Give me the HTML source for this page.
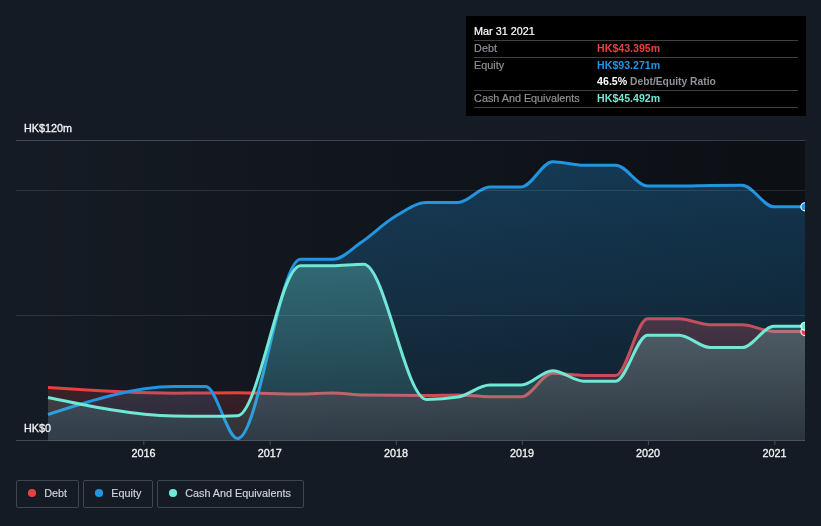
<!DOCTYPE html>
<html><head><meta charset="utf-8"><title>Debt to Equity History</title>
<style>
html,body{margin:0;padding:0;background:#151b24;}
body{width:821px;height:526px;overflow:hidden;position:relative;font-family:"Liberation Sans",sans-serif;}
svg{position:absolute;left:0;top:0;display:block;will-change:transform}
text{font-family:"Liberation Sans",sans-serif;}
</style></head><body>
<svg width="821" height="526" viewBox="0 0 821 526">
<defs>
<linearGradient id="bgG" x1="0" y1="0" x2="1" y2="0"><stop offset="0" stop-color="#000" stop-opacity="0"/><stop offset="1" stop-color="#000" stop-opacity="0.45"/></linearGradient>
<linearGradient id="eG" x1="0" y1="0" x2="0" y2="1"><stop offset="0" stop-color="#2394df" stop-opacity="0.30"/><stop offset="1" stop-color="#2394df" stop-opacity="0.10"/></linearGradient>
<linearGradient id="cG" x1="0" y1="0" x2="0" y2="1"><stop offset="0" stop-color="#71e7d6" stop-opacity="0.30"/><stop offset="1" stop-color="#71e7d6" stop-opacity="0.10"/></linearGradient>
<linearGradient id="dG" x1="0" y1="0" x2="0" y2="1"><stop offset="0" stop-color="#e64141" stop-opacity="0.30"/><stop offset="1" stop-color="#e64141" stop-opacity="0.10"/></linearGradient>
<clipPath id="clip"><rect x="16" y="130" width="789" height="311"/></clipPath>
</defs>
<rect x="0" y="0" width="821" height="526" fill="#151b24"/>
<rect x="16" y="140" width="789" height="300.5" fill="url(#bgG)"/>
<g clip-path="url(#clip)">
<path d="M48.00,387.50C90.13,390.35,132.26,393.20,174.40,393.20C184.87,393.20,195.35,393.07,205.82,393.00C216.41,392.93,227.00,392.80,237.60,392.80C258.55,392.80,279.50,394.00,300.45,394.00C310.92,394.00,321.40,393.00,331.88,393.00C342.47,393.00,353.06,394.83,363.65,395.00C384.60,395.33,405.55,395.50,426.50,395.50C436.98,395.50,447.45,395.00,457.93,395.00C468.52,395.00,479.11,396.70,489.70,396.70C500.29,396.70,510.88,396.70,521.47,396.70C531.83,396.70,542.19,373.20,552.55,373.20C563.03,373.20,573.50,375.50,583.98,375.50C594.57,375.50,605.16,375.50,615.75,375.50C626.34,375.50,636.93,318.80,647.52,318.80C658.00,318.80,668.47,318.80,678.95,318.80C689.42,318.80,699.90,324.70,710.38,324.70C720.97,324.70,731.56,324.70,742.15,324.70C752.74,324.70,763.33,331.50,773.92,331.50C784.28,331.50,794.64,331.50,805.00,331.50L805.00,440.5L48.00,440.5Z" fill="url(#dG)"/><path d="M48.00,387.50C90.13,390.35,132.26,393.20,174.40,393.20C184.87,393.20,195.35,393.07,205.82,393.00C216.41,392.93,227.00,392.80,237.60,392.80C258.55,392.80,279.50,394.00,300.45,394.00C310.92,394.00,321.40,393.00,331.88,393.00C342.47,393.00,353.06,394.83,363.65,395.00C384.60,395.33,405.55,395.50,426.50,395.50C436.98,395.50,447.45,395.00,457.93,395.00C468.52,395.00,479.11,396.70,489.70,396.70C500.29,396.70,510.88,396.70,521.47,396.70C531.83,396.70,542.19,373.20,552.55,373.20C563.03,373.20,573.50,375.50,583.98,375.50C594.57,375.50,605.16,375.50,615.75,375.50C626.34,375.50,636.93,318.80,647.52,318.80C658.00,318.80,668.47,318.80,678.95,318.80C689.42,318.80,699.90,324.70,710.38,324.70C720.97,324.70,731.56,324.70,742.15,324.70C752.74,324.70,763.33,331.50,773.92,331.50C784.28,331.50,794.64,331.50,805.00,331.50" fill="none" stroke="#e64141" stroke-width="3" stroke-linejoin="round"/>
<path d="M48.00,414.50C90.13,400.68,132.26,386.87,174.40,386.60C184.87,386.53,195.35,386.50,205.82,386.50C216.41,386.50,227.00,438.60,237.60,438.60C258.55,438.60,279.50,259.20,300.45,259.20C311.47,259.20,322.48,259.20,333.50,259.20C342.67,259.20,351.83,248.69,361.00,242.50C372.47,234.75,383.95,223.12,395.42,216.30C405.78,210.14,416.14,202.50,426.50,202.50C436.98,202.50,447.45,202.50,457.93,202.50C468.52,202.50,479.11,186.90,489.70,186.90C500.29,186.90,510.88,186.90,521.47,186.90C531.83,186.90,542.19,161.70,552.55,161.70C563.03,161.70,573.50,165.30,583.98,165.30C594.57,165.30,605.16,165.30,615.75,165.30C626.34,165.30,636.93,186.10,647.52,186.10C658.00,186.10,668.47,186.10,678.95,186.10C689.42,186.10,699.90,185.63,710.38,185.50C720.97,185.37,731.56,185.30,742.15,185.30C752.74,185.30,763.33,206.80,773.92,206.80C784.28,206.80,794.64,206.80,805.00,206.80L805.00,440.5L48.00,440.5Z" fill="url(#eG)"/><path d="M48.00,414.50C90.13,400.68,132.26,386.87,174.40,386.60C184.87,386.53,195.35,386.50,205.82,386.50C216.41,386.50,227.00,438.60,237.60,438.60C258.55,438.60,279.50,259.20,300.45,259.20C311.47,259.20,322.48,259.20,333.50,259.20C342.67,259.20,351.83,248.69,361.00,242.50C372.47,234.75,383.95,223.12,395.42,216.30C405.78,210.14,416.14,202.50,426.50,202.50C436.98,202.50,447.45,202.50,457.93,202.50C468.52,202.50,479.11,186.90,489.70,186.90C500.29,186.90,510.88,186.90,521.47,186.90C531.83,186.90,542.19,161.70,552.55,161.70C563.03,161.70,573.50,165.30,583.98,165.30C594.57,165.30,605.16,165.30,615.75,165.30C626.34,165.30,636.93,186.10,647.52,186.10C658.00,186.10,668.47,186.10,678.95,186.10C689.42,186.10,699.90,185.63,710.38,185.50C720.97,185.37,731.56,185.30,742.15,185.30C752.74,185.30,763.33,206.80,773.92,206.80C784.28,206.80,794.64,206.80,805.00,206.80" fill="none" stroke="#2394df" stroke-width="3" stroke-linejoin="round"/>
<path d="M48.00,397.50C90.13,406.35,132.26,415.20,174.40,416.00C184.87,416.20,195.35,416.30,205.82,416.30C216.41,416.30,227.00,416.10,237.60,415.70C258.55,414.91,279.50,265.70,300.45,265.70C310.92,265.70,321.40,265.70,331.88,265.70C342.47,265.70,353.06,264.20,363.65,264.20C384.60,264.20,405.55,399.40,426.50,399.40C436.98,399.40,447.45,398.60,457.93,397.00C468.52,395.38,479.11,385.00,489.70,385.00C500.29,385.00,510.88,385.00,521.47,385.00C531.83,385.00,542.19,370.70,552.55,370.70C563.03,370.70,573.50,381.30,583.98,381.30C594.57,381.30,605.16,381.27,615.75,381.20C626.34,381.13,636.93,335.20,647.52,335.20C658.00,335.20,668.47,335.20,678.95,335.20C689.42,335.20,699.90,347.60,710.38,347.60C720.97,347.60,731.56,347.60,742.15,347.60C752.74,347.60,763.33,326.30,773.92,326.30C784.28,326.30,794.64,326.30,805.00,326.30L805.00,440.5L48.00,440.5Z" fill="url(#cG)"/><path d="M48.00,397.50C90.13,406.35,132.26,415.20,174.40,416.00C184.87,416.20,195.35,416.30,205.82,416.30C216.41,416.30,227.00,416.10,237.60,415.70C258.55,414.91,279.50,265.70,300.45,265.70C310.92,265.70,321.40,265.70,331.88,265.70C342.47,265.70,353.06,264.20,363.65,264.20C384.60,264.20,405.55,399.40,426.50,399.40C436.98,399.40,447.45,398.60,457.93,397.00C468.52,395.38,479.11,385.00,489.70,385.00C500.29,385.00,510.88,385.00,521.47,385.00C531.83,385.00,542.19,370.70,552.55,370.70C563.03,370.70,573.50,381.30,583.98,381.30C594.57,381.30,605.16,381.27,615.75,381.20C626.34,381.13,636.93,335.20,647.52,335.20C658.00,335.20,668.47,335.20,678.95,335.20C689.42,335.20,699.90,347.60,710.38,347.60C720.97,347.60,731.56,347.60,742.15,347.60C752.74,347.60,763.33,326.30,773.92,326.30C784.28,326.30,794.64,326.30,805.00,326.30" fill="none" stroke="#71e7d6" stroke-width="3" stroke-linejoin="round"/>
<circle cx="805.0" cy="331.5" r="4.1" fill="#e64141" stroke="#fff" stroke-width="1.1"/>
<circle cx="805.0" cy="206.8" r="4.1" fill="#2394df" stroke="#fff" stroke-width="1.1"/>
<circle cx="805.0" cy="326.3" r="4.1" fill="#71e7d6" stroke="#fff" stroke-width="1.1"/>
</g>
<g stroke="#fff" stroke-width="1" shape-rendering="crispEdges">
<line x1="16" x2="805" y1="140.5" y2="140.5" stroke-opacity="0.20"/>
<line x1="16" x2="805" y1="190.5" y2="190.5" stroke-opacity="0.10"/>
<line x1="16" x2="805" y1="315.5" y2="315.5" stroke-opacity="0.10"/>
<line x1="16" x2="805" y1="440.5" y2="440.5" stroke-opacity="0.20"/>
</g>
<g stroke="#fff" stroke-opacity="0.22" stroke-width="1">
<line x1="143.8" x2="143.8" y1="441" y2="445"/><line x1="270.2" x2="270.2" y1="441" y2="445"/><line x1="396.3" x2="396.3" y1="441" y2="445"/><line x1="522.3" x2="522.3" y1="441" y2="445"/><line x1="648.4" x2="648.4" y1="441" y2="445"/><line x1="774.8" x2="774.8" y1="441" y2="445"/>
</g>
<g font-size="10.8" fill="#f4f5f6" stroke="#f4f5f6" stroke-width="0.3">
<text x="24" y="132">HK$120m</text>
<text x="24" y="432">HK$0</text>
<text x="143.4" y="456.8" text-anchor="middle">2016</text><text x="269.8" y="456.8" text-anchor="middle">2017</text><text x="395.9" y="456.8" text-anchor="middle">2018</text><text x="521.9" y="456.8" text-anchor="middle">2019</text><text x="648.0" y="456.8" text-anchor="middle">2020</text><text x="774.4" y="456.8" text-anchor="middle">2021</text>
</g>
<!-- tooltip -->
<rect x="466" y="16" width="340" height="100" fill="#000"/>
<g stroke="#fff" stroke-opacity="0.25" stroke-width="1" shape-rendering="crispEdges">
<line x1="474" x2="798" y1="40.5" y2="40.5"/>
<line x1="474" x2="798" y1="57.5" y2="57.5"/>
<line x1="474" x2="798" y1="90.5" y2="90.5"/>
<line x1="474" x2="798" y1="107.5" y2="107.5"/>
</g>
<g font-size="10.8">
<text x="474.1" y="35" fill="#fff" stroke="#fff" stroke-width="0.2">Mar 31 2021</text>
<text x="474.1" y="51.6" fill="#8f9296" stroke="#8f9296" stroke-width="0.2">Debt</text>
<text x="597.1" y="51.6" fill="#e64141" font-weight="bold" font-size="10.6">HK$43.395m</text>
<text x="474.1" y="69" fill="#8f9296" stroke="#8f9296" stroke-width="0.2">Equity</text>
<text x="597.1" y="69" fill="#2394df" font-weight="bold" font-size="10.6">HK$93.271m</text>
<text x="597.1" y="84.8" fill="#fff"><tspan font-weight="bold" font-size="10.6">46.5%</tspan><tspan fill="#8f9296" font-weight="bold" font-size="10.3"> Debt/Equity Ratio</tspan></text>
<text x="474.1" y="101.6" fill="#8f9296" stroke="#8f9296" stroke-width="0.2">Cash And Equivalents</text>
<text x="597.1" y="101.6" fill="#71e7d6" font-weight="bold" font-size="10.6">HK$45.492m</text>
</g>
<!-- legend -->
<g fill="none" stroke="#40464f" stroke-width="1">
<rect x="16.5" y="480.5" width="62" height="27" rx="1.5"/>
<rect x="83.5" y="480.5" width="69" height="27" rx="1.5"/>
<rect x="157.5" y="480.5" width="146" height="27" rx="1.5"/>
</g>
<circle cx="32" cy="493" r="4.1" fill="#e64141"/>
<circle cx="99" cy="493" r="4.1" fill="#2394df"/>
<circle cx="173" cy="493" r="4.1" fill="#71e7d6"/>
<g font-size="10.8" fill="#d2d5d8" stroke="#d2d5d8" stroke-width="0.15">
<text x="44.3" y="497">Debt</text>
<text x="111.3" y="497">Equity</text>
<text x="185.2" y="497">Cash And Equivalents</text>
</g>
</svg>
</body></html>
